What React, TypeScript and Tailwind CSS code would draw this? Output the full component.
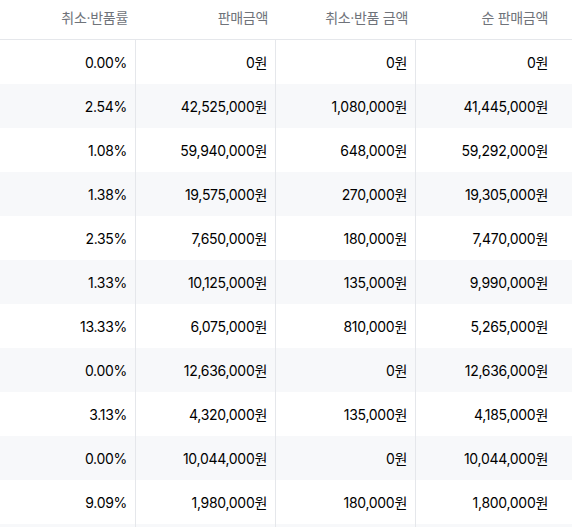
import React from "react";

const rows = [
  ["0.00%", "0원", "0원", "0원"],
  ["2.54%", "42,525,000원", "1,080,000원", "41,445,000원"],
  ["1.08%", "59,940,000원", "648,000원", "59,292,000원"],
  ["1.38%", "19,575,000원", "270,000원", "19,305,000원"],
  ["2.35%", "7,650,000원", "180,000원", "7,470,000원"],
  ["1.33%", "10,125,000원", "135,000원", "9,990,000원"],
  ["13.33%", "6,075,000원", "810,000원", "5,265,000원"],
  ["0.00%", "12,636,000원", "0원", "12,636,000원"],
  ["3.13%", "4,320,000원", "135,000원", "4,185,000원"],
  ["0.00%", "10,044,000원", "0원", "10,044,000원"],
  ["9.09%", "1,980,000원", "180,000원", "1,800,000원"],
  ["", "", "", ""],
];

const headers = ["취소·반품률", "판매금액", "취소·반품 금액", "순 판매금액"];
const widths = ["w-[136px]", "w-[140px]", "w-[140px]", "w-[140px]"];

export default function App() {
  return (
    <div
      className="w-[572px] h-[527px] overflow-hidden bg-white text-[14px] tracking-[-0.3px]"
      style={{ fontFamily: "Inter, 'Noto Sans CJK KR', sans-serif" }}
    >
      <div className="flex h-[40px] border-b border-[#e5e7eb]">
        {headers.map((h, i) => (
          <div
            key={i}
            className={`${widths[i]} shrink-0 flex items-center justify-end pr-[8px] pb-[5px] text-[#6f737a]`}
          >
            {h}
          </div>
        ))}
      </div>
      {rows.map((r, ri) => (
        <div
          key={ri}
          className={`flex h-[44px] ${ri % 2 === 1 ? "bg-[#f7f8fa]" : "bg-white"}`}
        >
          {r.map((c, ci) => (
            <div
              key={ci}
              className={`${widths[ci]} shrink-0 flex items-center justify-end pr-[8px] text-[#2a2a2e]${
                ci < 3 ? " border-r border-[#e5e7eb]" : ""
              }`}
            >
              {c}
            </div>
          ))}
        </div>
      ))}
    </div>
  );
}
